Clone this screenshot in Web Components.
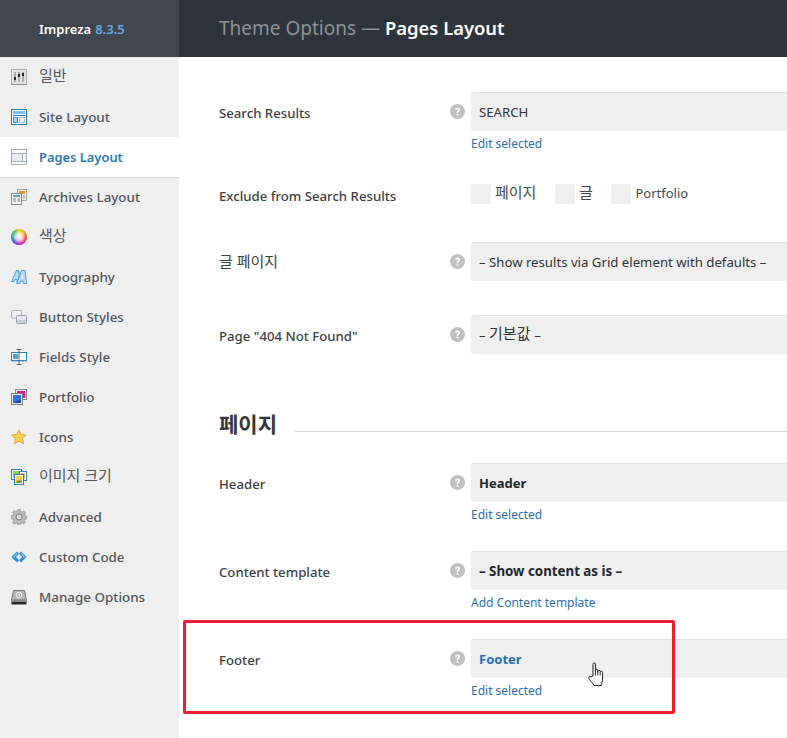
<!DOCTYPE html>
<html lang="ko">
<head>
<meta charset="utf-8">
<title>Theme Options</title>
<style>
  html, body { margin: 0; height: 100%; overflow: hidden; background: #fff; }
  body { font: 13px "Noto Sans", "Noto Sans CJK KR", sans-serif; color: #444; }
</style>
</head>
<body>

<template id="options-app-template">
  <style>
    :host { display: grid; grid-template-columns: 179px 1fr; width: 787px; height: 738px; overflow: hidden; }
    .side { background: #efefef; display: flex; flex-direction: column; }
    .main { position: relative; min-width: 0; overflow: hidden; background: #fff; }
  </style>
  <div class="side"><slot name="side"></slot></div>
  <div class="main"><slot></slot></div>
</template>

<template id="ko-text-template">
  <style>
    /* hangul runs larger and lighter than the latin around it */
    :host { font-size: 15px; font-weight: 400; line-height: 1; vertical-align: 1px; }
  </style>
  <slot></slot>
</template>

<template id="side-brand-template">
  <style>
    :host { display: flex; align-items: center; height: 57px; padding-left: 39px; background: #3f464d; color: #fff; font-weight: 600; font-size: 13px; }
    span { color: #6ca6e0; margin-left: 4px; }
  </style>
  <slot></slot><span><slot name="version"></slot></span>
</template>

<template id="nav-item-template">
  <style>
    :host { display: flex; align-items: center; height: 40px; padding-left: 11px; box-sizing: border-box; color: #50555b; font-size: 13.4px; font-weight: 500; }
    :host([active]) { background: #fff; color: #2a78b8; font-size: 12.9px; font-weight: 600; border-bottom: 1px solid #d8d8d8; height: 41px; margin-bottom: -1px; }
    .ico { width: 16px; height: 16px; margin-right: 12px; flex: none; }
    ::slotted(svg) { display: block; width: 16px; height: 16px; }
    .txt { line-height: 20px; }
  </style>
  <div class="ico"><slot name="icon"></slot></div>
  <div class="txt"><slot></slot></div>
</template>

<template id="top-bar-template">
  <style>
    :host { display: flex; align-items: center; height: 57px; box-sizing: border-box; padding: 0 0 2px 40px; background: #2d343b; color: #8f9398; font-size: 19px; white-space: pre; }
    b { color: #fff; font-weight: 600; font-size: 18.4px; }
  </style>
  <slot></slot><b><slot name="page"></slot></b>
</template>

<template id="option-row-template">
  <style>
    :host { display: flex; padding: 0 0 34px 40px; }
    .label { width: 231px; flex: none; color: #3c3f44; font-weight: 500; font-size: 13.2px; line-height: 20px; padding-top: 11px; }
    :host([plain]) .label { padding-top: 6px; }
    .help { width: 21px; flex: none; padding-top: 12px; box-sizing: border-box; }
    .help svg { display: block; width: 15px; height: 15px; }
    .field { flex: none; width: 420px; }
    :host([plain]) .help svg { visibility: hidden; }
  </style>
  <div class="label"><slot name="label"></slot></div>
  <div class="help"><svg viewBox="0 0 16 16"><circle cx="8" cy="8" r="8" fill="#bfc0c2"/><path d="M5.4 6.2C5.5 4.6 6.6 3.8 8.1 3.8c1.5 0 2.6.9 2.6 2.2 0 1-.6 1.5-1.3 2-.6.4-.8.7-.8 1.4H7.1c0-1.1.3-1.7 1.1-2.2.5-.4.8-.6.8-1.1 0-.5-.4-.8-.9-.8-.6 0-1 .3-1.1 1zM7 10.4h1.7v1.8H7z" fill="#fff"/></svg></div>
  <div class="field"><slot></slot></div>
</template>

<template id="select-box-template">
  <style>
    :host { display: flex; align-items: center; height: 39px; box-sizing: border-box; padding: 0 8px; background: #efefef; border-top: 1px solid #e2e2e2; border-radius: 3px 0 0 3px; color: #333; font-size: 13.2px; }
    :host([strong]) { font-weight: 700; color: #23282d; font-size: 13px; padding-bottom: 1px; }
    :host([accent]) { color: #1e6eb4; }
  </style>
  <slot></slot>
</template>

<template id="field-link-template">
  <style>
    :host { display: block; height: 22px; margin-bottom: -7px; padding-top: 3px; box-sizing: border-box; line-height: 19px; color: #2a6fb0; font-size: 12px; }
  </style>
  <slot></slot>
</template>

<template id="check-box-template">
  <style>
    :host { display: flex; align-items: center; height: 20px; color: #44484d; font-size: 13px; }
    i { display: block; width: 20px; height: 20px; margin-right: 4px; background: #efefef; border-radius: 2px; }
    span { margin-top: -2px; }
  </style>
  <i></i><span><slot></slot></span>
</template>

<template id="check-group-template">
  <style>
    :host { display: flex; gap: 18.6px; padding-top: 4px; height: 24px; }
  </style>
  <slot></slot>
</template>

<template id="section-title-template">
  <style>
    :host { display: flex; align-items: flex-end; height: 75px; padding: 0 0 31px 40px; box-sizing: border-box; }
    h2 { margin: 0 0 -5px; font-size: 21px; font-weight: 700; line-height: 26px; color: #33363a; }
    .rule { flex: 1; height: 1px; background: #d9d9d9; margin: 0 0 0 18px; }
  </style>
  <h2><slot></slot></h2><div class="rule"></div>
</template>

<template id="highlight-box-template">
  <style>
    :host { position: absolute; left: 4px; top: 620px; width: 492px; height: 94px; box-sizing: border-box; border: 3px solid #ed1c2e; border-radius: 2px; pointer-events: none; }
  </style>
</template>

<template id="hand-cursor-template">
  <style>
    :host { position: absolute; left: 408px; top: 662px; width: 17px; height: 25px; }
    svg { display: block; width: 17px; height: 25px; }
  </style>
  <svg viewBox="0 0 17 25"><path d="M6 14V2.200a1.200 1.200 0 0 1 2.400 0V8.500a1.200 1.200 0 0 1 2.400 0v1a1.200 1.200 0 0 1 2.400 0v1a1.200 1.200 0 0 1 2.400 0V17c0 2.500-1 4-1.500 6.500H7c-.5-2-3-3.500-5-7-.8-1.400.6-2.600 1.800-1.600z" fill="#fff" stroke="#1b1b1b" stroke-width="1" stroke-linejoin="round"/><path d="M8.400 8.500v5M10.800 9.500v4M13.200 10.500v3" fill="none" stroke="#1b1b1b" stroke-width=".9"/></svg>
</template>

<options-app>
  <side-brand slot="side">Impreza<span slot="version">8.3.5</span></side-brand>

  <nav-item slot="side"><svg slot="icon" viewBox="0 0 16 16"><rect x=".5" y=".5" width="15" height="15" fill="#e2e2e2" stroke="#b0b0b0"/><path d="M0 15.500h16" stroke="#8d8d8d"/><path d="M4 3v10M8 3v10M12 3v10" stroke="#777" stroke-width="1"/><path d="M3 8h2v3H3zM7 5h2v3H7zM11 4h2v3h-2z" fill="#222"/></svg><ko-text>일반</ko-text></nav-item>
  <nav-item slot="side"><svg slot="icon" viewBox="0 0 16 16"><rect x=".5" y=".5" width="15" height="15" fill="#fff" stroke="#1f7ab5"/><rect x="2" y="2" width="12" height="3" fill="#7cc0ee"/><path d="M2 6.500h12" stroke="#1f7ab5"/><rect x="2.500" y="8.500" width="4" height="5" fill="#9fd3f3" stroke="#4a9ad0"/><rect x="8.500" y="8.500" width="5" height="5" fill="#eee" stroke="#bbb"/></svg>Site Layout</nav-item>
  <nav-item slot="side" active><svg slot="icon" viewBox="0 0 16 16"><rect x=".5" y=".5" width="15" height="15" fill="#fafafa" stroke="#a4adbb"/><path d="M0 4.500h16" stroke="#a4adbb"/><rect x="1" y="5" width="10" height="7" fill="#e8edf2"/><path d="M11.500 5v7M0 12.500h16" stroke="#a4adbb"/></svg>Pages Layout</nav-item>
  <nav-item slot="side"><svg slot="icon" viewBox="0 0 16 16"><rect x="6.500" y=".5" width="9" height="11" fill="#f1f1f1" stroke="#a8a8a8"/><rect x="8" y="2" width="6" height="3" fill="#ed9a28"/><path d="M12 7h2M12 9h2" stroke="#999"/><rect x=".5" y="4.500" width="10" height="11" fill="#fafafa" stroke="#8c8c8c"/><rect x="2" y="6" width="7" height="2" fill="#5f9fdc"/><path d="M2 10h3M2 12h3M6.500 10h2.500M6.500 12h2.500" stroke="#777"/></svg>Archives Layout</nav-item>
  <nav-item slot="side"><div slot="icon" style="width:16px;height:16px;border-radius:50%;background:radial-gradient(circle,#fff 0,rgba(255,255,255,.75) 30%,rgba(255,255,255,0) 65%),conic-gradient(#f5d210,#f59a1a 50deg,#ec3b2a 100deg,#e0209a 150deg,#8a21c4 190deg,#2a4fd0 235deg,#18a8b8 280deg,#4cb82e 325deg,#f5d210)"></div><ko-text>색상</ko-text></nav-item>
  <nav-item slot="side"><svg slot="icon" viewBox="0 0 16 16"><g fill="#b5dcf9" stroke="#3f94dc" stroke-width=".9" stroke-linejoin="round"><path d="M.6 12.500L5.500 1.500h2.300l.6 11H6l-.1-2H4l-1 2z"/><path d="M5.600 14.500L10.500 1.500h3.500l1.500 13h-3.200l-.2-2.500h-2.300l-1 2.500z"/></g><path d="M11.700 5.500l.3 4h-1.600z" fill="#fff"/></svg>Typography</nav-item>
  <nav-item slot="side"><svg slot="icon" viewBox="0 0 16 16"><rect x=".5" y="1.500" width="10" height="7.500" rx="1" fill="#eef2f7" stroke="#a8afb9"/><rect x="5.500" y="6.500" width="10" height="8" rx="1" fill="#e3e8ef" stroke="#97a0ac"/><rect x="6" y="11" width="9" height="3" fill="#c9d0d9"/></svg>Button Styles</nav-item>
  <nav-item slot="side"><svg slot="icon" viewBox="0 0 16 16"><rect x=".5" y="3.500" width="15" height="8" fill="#fff" stroke="#2a86c2"/><rect x="2" y="5" width="5" height="5" fill="#45a6e2"/><path d="M0 12.500h16" stroke="#b6cfe0"/><path d="M5.500 .5h5M8 .5v14.500M5.500 15.500h5" stroke="#666" stroke-width="1"/></svg>Fields Style</nav-item>
  <nav-item slot="side"><svg slot="icon" viewBox="0 0 16 16"><rect x="4.500" y=".5" width="11" height="10" fill="#f4f4f4" stroke="#8c8c8c"/><rect x="6" y="2" width="8" height="7" fill="#e0168e"/><rect x=".5" y="4.500" width="11" height="11" fill="#eee" stroke="#7b7b7b"/><rect x="2" y="6" width="8" height="8" fill="#2c74dc"/><path d="M2 14l8-4v4z" fill="#174fa8"/></svg>Portfolio</nav-item>
  <nav-item slot="side"><svg slot="icon" viewBox="0 0 16 16"><path d="M8 .8l2.200 4.700 5.100.6-3.800 3.500 1 5.100L8 12.200l-4.500 2.500 1-5.100L.7 6.100l5.100-.6z" fill="#f9cf52" stroke="#dda63c" stroke-width="1" stroke-linejoin="round"/></svg>Icons</nav-item>
  <nav-item slot="side"><svg slot="icon" viewBox="0 0 16 16"><rect x=".5" y=".5" width="10" height="10" fill="#fff" stroke="#2a80c8"/><rect x="2" y="2" width="7" height="7" fill="#8ccf5a"/><rect x="8.500" y="2.500" width="7" height="9" fill="#fff" stroke="#2a80c8"/><rect x="10" y="4" width="4" height="6" fill="#e8c23a"/><rect x="3.500" y="5.500" width="9" height="10" fill="#fff" stroke="#2a80c8"/><rect x="5" y="7" width="6" height="7" fill="#f0d048"/><path d="M5 14l2-3 1 1.500 1-2 2 3.500z" fill="#4d9a2a"/></svg><ko-text>이미지 크기</ko-text></nav-item>
  <nav-item slot="side"><svg slot="icon" viewBox="0 0 16 16"><path d="M6.800 .6h2.400l.4 2 1.500.6 1.700-1.100 1.700 1.700-1.100 1.700.6 1.500 2 .4v2.400l-2 .4-.6 1.500 1.100 1.700-1.700 1.700-1.700-1.100-1.500.6-.4 2H6.800l-.4-2-1.500-.6-1.700 1.100-1.700-1.700 1.100-1.700-.6-1.500-2-.4V6.800l2-.4.6-1.500-1.100-1.700 1.700-1.700 1.700 1.100 1.500-.6z" fill="#b9b9b9" stroke="#8b8b8b" stroke-width=".7"/><circle cx="8" cy="8" r="3" fill="#dadada" stroke="#7c7c7c"/></svg>Advanced</nav-item>
  <nav-item slot="side"><svg slot="icon" viewBox="0 0 16 16"><path d="M6 2.500L.4 8 6 13.500 8 11.200 5 8l3-3.200zM10 2.500L15.600 8 10 13.500 8 11.200 11 8 8 4.800z" fill="#2a8fdc"/><path d="M5.800 3.800L2 8l1 1 3.500-4.300zM10.200 3.800L14 8l-1 1-3.500-4.300z" fill="#7cc4f2"/></svg>Custom Code</nav-item>
  <nav-item slot="side"><svg slot="icon" viewBox="0 0 16 16"><path d="M2.500 1.500h11L15.500 11h-15z" fill="#b4b4b4" stroke="#777"/><rect x=".5" y="11" width="15" height="4.500" fill="#2a2a2a"/><path d="M1 12h14" stroke="#ededed"/><circle cx="8" cy="6" r="2.800" fill="none" stroke="#f2f2f2"/><path d="M8 4.500V6l1 1" fill="none" stroke="#f2f2f2"/></svg>Manage Options</nav-item>

  <top-bar>Theme Options — <span slot="page">Pages Layout</span></top-bar>
  <div style="height:35px"></div>

  <option-row>
    <span slot="label">Search Results</span>
    <select-box>SEARCH</select-box>
    <field-link>Edit selected</field-link>
  </option-row>
  <option-row plain>
    <span slot="label">Exclude from Search Results</span>
    <check-group>
      <check-box><ko-text style="vertical-align:0">페이지</ko-text></check-box>
      <check-box><ko-text style="vertical-align:0">글</ko-text></check-box>
      <check-box>Portfolio</check-box>
    </check-group>
  </option-row>
  <option-row>
    <ko-text slot="label">글 페이지</ko-text>
    <select-box>– Show results via Grid element with defaults –</select-box>
  </option-row>
  <option-row>
    <span slot="label">Page "404 Not Found"</span>
    <select-box><span>– <ko-text>기본값</ko-text> –</span></select-box>
  </option-row>

  <section-title>페이지</section-title>

  <option-row>
    <span slot="label">Header</span>
    <select-box strong>Header</select-box>
    <field-link>Edit selected</field-link>
  </option-row>
  <option-row>
    <span slot="label">Content template</span>
    <select-box strong style="font-size:13.3px">– Show content as is –</select-box>
    <field-link>Add Content template</field-link>
  </option-row>
  <option-row>
    <span slot="label">Footer</span>
    <select-box strong accent>Footer</select-box>
    <field-link>Edit selected</field-link>
  </option-row>

  <highlight-box></highlight-box>
  <hand-cursor></hand-cursor>
</options-app>

<script>
  (function(customElements) {
    'use strict';

    // every element here is just a template stamped into an open shadow root
    function define(name) {
      const template = document.querySelector('#' + name + '-template');
      customElements.define(name, class extends HTMLElement {
        constructor() {
          super();
          this.attachShadow({mode: 'open'});
          this.shadowRoot.appendChild(document.importNode(template.content, true));
        }
      });
    }

    ['options-app', 'ko-text', 'side-brand', 'nav-item', 'top-bar', 'option-row', 'select-box',
     'field-link', 'check-box', 'check-group', 'section-title', 'highlight-box',
     'hand-cursor'].forEach(define);
  })(window.customElements);
</script>
</body>
</html>
